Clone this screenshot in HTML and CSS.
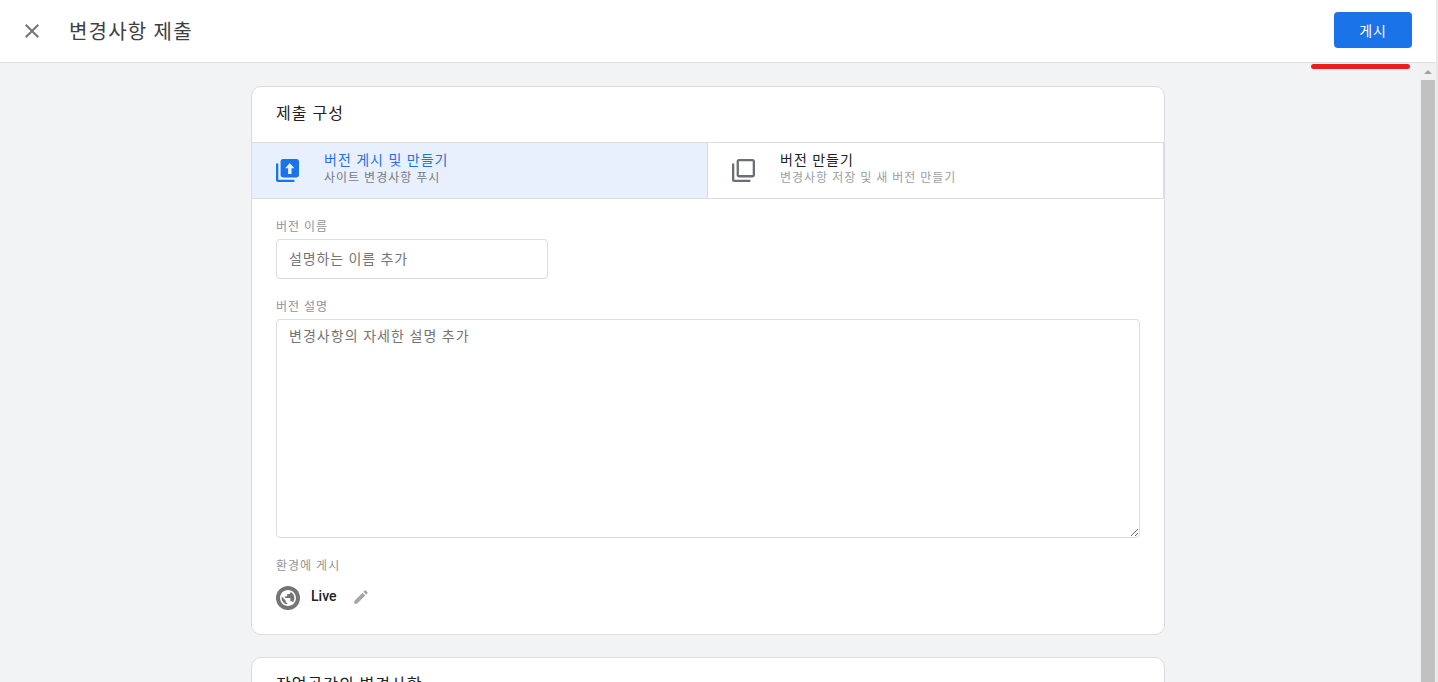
FILE: index.html
```html
<!DOCTYPE html>
<html lang="ko">

<head>
  <meta charset="UTF-8">
  <meta name="viewport" content="width=device-width, initial-scale=1.0">
  <title>변경사항 제출</title>
  <link rel="stylesheet" href="styles.css">
</head>

<body>
  <header class="topbar">
    <div class="topbar-left">
      <svg class="close-icon" viewBox="0 0 24 24" width="24" height="24">
        <path d="M19 6.41 17.59 5 12 10.59 6.41 5 5 6.41 10.59 12 5 17.59 6.41 19 12 13.41 17.59 19 19 17.59 13.41 12z" />
      </svg>
      <h1 class="title">변경사항 제출</h1>
    </div>
    <button class="publish-btn">게시</button>
    <div class="red-mark"></div>
  </header>

  <div class="body-row">
    <main class="content">
      <section class="card">
        <h2 class="card-title">제출 구성</h2>
        <div class="tabs">
          <div class="tab tab-active">
            <svg class="tab-icon" viewBox="2 2 20 20" width="23" height="23">
              <path d="M4 6H2v14c0 1.1.9 2 2 2h14v-2H4V6z" />
              <path fill-rule="evenodd" d="M20 2H8c-1.1 0-2 .9-2 2v12c0 1.100.9 2 2 2h12c1.100 0 2-.9 2-2V4c0-1.100-.9-2-2-2zm-6 3.500L18 10h-2.500v5h-3v-5H10l4-4.500z" />
            </svg>
            <div class="tab-text">
              <div class="tab-name">버전 게시 및 만들기</div>
              <div class="tab-desc">사이트 변경사항 푸시</div>
            </div>
          </div>
          <div class="tab">
            <svg class="tab-icon" viewBox="2 2 20 20" width="23" height="23">
              <path d="M4 6H2v14c0 1.1.9 2 2 2h14v-2H4V6z" />
              <path d="M20 2H8c-1.1 0-2 .9-2 2v12c0 1.100.9 2 2 2h12c1.100 0 2-.9 2-2V4c0-1.100-.9-2-2-2zm0 14H8V4h12v12z" />
            </svg>
            <div class="tab-text">
              <div class="tab-name">버전 만들기</div>
              <div class="tab-desc">변경사항 저장 및 새 버전 만들기</div>
            </div>
          </div>
        </div>
        <form class="form">
          <label class="field-label" for="version-name">버전 이름</label>
          <input class="name-input" id="version-name" type="text" placeholder="설명하는 이름 추가">
          <label class="field-label" for="version-desc">버전 설명</label>
          <textarea class="desc-input" id="version-desc" placeholder="변경사항의 자세한 설명 추가"></textarea>
          <div class="field-label">환경에 게시</div>
          <div class="env-row">
            <svg class="globe" viewBox="0 0 24 24" width="24" height="24">
              <circle class="globe-ring" cx="12" cy="12" r="12" />
              <path class="globe-face" transform="translate(2.400 2.400) scale(.8)" d="M12 2C6.480 2 2 6.480 2 12s4.480 10 10 10 10-4.480 10-10S17.520 2 12 2zm-1 17.930c-3.950-.49-7-3.850-7-7.930 0-.62.080-1.210.210-1.790L9 15v1c0 1.100.9 2 2 2v1.930zm6.900-2.540c-.26-.81-1-1.390-1.900-1.390h-1v-3c0-.55-.45-1-1-1H8v-2h2c.55 0 1-.45 1-1V7h2c1.100 0 2-.9 2-2v-.41c2.930 1.190 5 4.060 5 7.410 0 2.080-.8 3.970-2.100 5.390z" />
            </svg>
            <span class="env-name">Live</span>
            <svg class="pencil" viewBox="0 0 24 24" width="18" height="18">
              <path d="M3 17.250V21h3.750L17.810 9.940l-3.750-3.750L3 17.250zM20.710 7.040c.39-.39.39-1.020 0-1.410l-2.340-2.340c-.39-.39-1.020-.39-1.410 0l-1.830 1.830 3.750 3.750 1.830-1.830z" />
            </svg>
          </div>
        </form>
      </section>
      <section class="card">
        <h2 class="card-title">작업공간의 변경사항</h2>
      </section>
    </main>
    <div class="scrollbar">
      <div class="scroll-arrow"></div>
      <div class="scroll-thumb"></div>
    </div>
  </div>
</body>

</html>
```

FILE: styles.css
```css
* {
  box-sizing: border-box;
}

html,
body {
  height: 100%;
}

body {
  margin: 0;
  display: flex;
  flex-direction: column;
  overflow: hidden;
  background-color: #f1f3f4;
  border-right: 2px solid #e8e8e8;
  font-family: Roboto, "Noto Sans CJK KR", sans-serif;
  color: #202124;
}

.topbar {
  position: relative;
  flex: none;
  height: 63px;
  padding: 0 24px 0 20px;
  display: flex;
  align-items: center;
  justify-content: space-between;
  background-color: #fff;
  border-bottom: 1px solid #dadce0;
}

.topbar-left {
  display: flex;
  align-items: center;
  gap: 25px;
}

.close-icon {
  fill: #757575;
}

.title {
  margin: 0 0 2px;
  font-size: 20px;
  font-weight: 400;
  letter-spacing: 1.2px;
  color: #3c4043;
}

.publish-btn {
  width: 78px;
  height: 36px;
  margin-bottom: 2px;
  border: 0;
  border-radius: 4px;
  background-color: #1a73e8;
  color: #fff;
  font-family: inherit;
  font-size: 14px;
  letter-spacing: .8px;
}

.red-mark {
  position: absolute;
  left: 1311px;
  top: 64px;
  width: 99px;
  height: 5px;
  border-radius: 3px;
  background-color: #ed1c24;
}

.body-row {
  flex: 1;
  min-height: 0;
  display: flex;
}

.content {
  flex: 1;
  padding: 23px 254px 0 251px;
  overflow: hidden;
}

.card {
  margin-bottom: 22px;
  background-color: #fff;
  border: 1px solid #dadce0;
  border-radius: 10px;
}

.card-title {
  margin: 0;
  height: 55px;
  padding: 16px 24px 0;
  font-size: 16px;
  line-height: 22px;
  font-weight: 400;
  letter-spacing: 1px;
}

.tabs {
  display: flex;
  height: 57px;
  border-top: 1px solid #dadce0;
  border-bottom: 1px solid #dadce0;
  border-right: 1px solid #dadce0;
}

.tab {
  flex: 1;
  display: flex;
  align-items: center;
  gap: 25px;
  padding-left: 24px;
}

.tab + .tab {
  border-left: 1px solid #dadce0;
}

.tab-active {
  flex: none;
  width: 455px;
  background-color: #e8f0fe;
}

.tab-icon {
  flex: none;
  fill: #6b6f73;
}

.tab-active .tab-icon {
  fill: #1a73e8;
}

.tab-text {
  padding-bottom: 4px;
}

.tab-name {
  margin-bottom: 1px;
  font-size: 14px;
  line-height: 18px;
  letter-spacing: 1px;
  color: #202124;
}

.tab-active .tab-name {
  color: #1a73e8;
}

.tab-desc {
  font-size: 12px;
  line-height: 16px;
  letter-spacing: 1px;
  color: #9aa0a6;
}

.tab-active .tab-desc {
  color: #757a80;
}

.form {
  display: flex;
  flex-direction: column;
  align-items: flex-start;
  height: 435px;
  padding: 20px 24px 0;
}

.field-label {
  font-size: 12px;
  line-height: 16px;
  letter-spacing: 1px;
  color: #8f9499;
  margin-bottom: 4px;
}

.name-input,
.desc-input {
  display: block;
  border: 1px solid #dadce0;
  border-radius: 4px;
  padding: 0 12px;
  background-color: #fff;
  font-family: inherit;
  font-size: 14px;
  color: #202124;
  outline: none;
}

.name-input::placeholder,
.desc-input::placeholder {
  color: #757575;
  opacity: 1;
}

.name-input {
  width: 272px;
  height: 40px;
  margin-bottom: 20px;
  letter-spacing: .9px;
}

.desc-input {
  width: 864px;
  height: 219px;
  padding-top: 8px;
  line-height: 17px;
  margin-bottom: 20px;
  letter-spacing: 1.05px;
}

.env-row {
  display: flex;
  align-items: center;
  margin-top: 8px;
}

.globe-ring {
  fill: #757575;
}

.globe-face {
  fill: #fff;
}

.env-name {
  margin-left: 11px;
  font-size: 14px;
  font-weight: 500;
  position: relative;
  top: -2px;
}

.pencil {
  margin-left: 16px;
  position: relative;
  top: -1px;
  fill: #a6a6a6;
}

.scrollbar {
  flex: none;
  width: 17px;
  background-color: #f1f1f1;
  display: flex;
  flex-direction: column;
  align-items: center;
}

.scroll-arrow {
  margin-top: 7px;
  width: 0;
  height: 0;
  border-left: 4px solid transparent;
  border-right: 4px solid transparent;
  border-bottom: 4px solid #a3a3a3;
}

.scroll-thumb {
  flex: 1;
  align-self: flex-start;
  width: 14px;
  margin: 6px 0 0 2px;
  background-color: #c1c1c1;
}
```
